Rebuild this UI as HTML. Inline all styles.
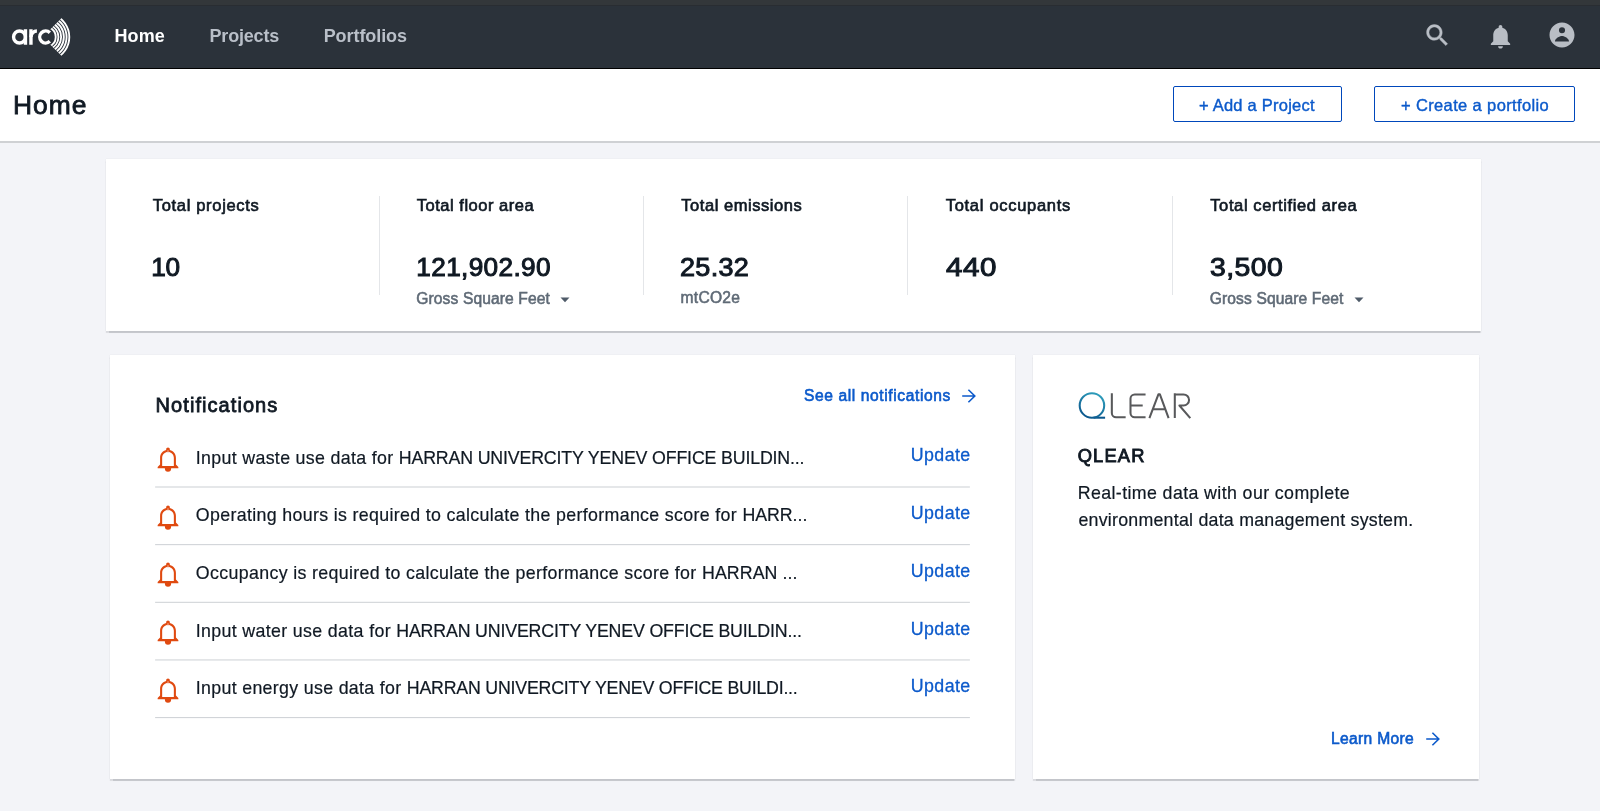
<!DOCTYPE html>
<html lang="en">
<head>
<meta charset="utf-8">
<title>Arc - Home</title>
<style>
*{box-sizing:border-box;margin:0;padding:0}
html,body{width:1600px;height:811px;overflow:hidden}
body{background:#f3f4f8;font-family:"Liberation Sans",sans-serif;color:#101923;position:relative}
.t{position:absolute;white-space:nowrap;line-height:1}
#strip{position:absolute;left:0;top:0;width:1600px;height:5px;background:#33373a}
#nav{position:absolute;left:0;top:5px;width:1600px;height:64px;background:#2b323a;border-top:1px solid #292d32;border-bottom:1px solid #000}
#head{position:absolute;left:0;top:69px;width:1600px;height:74px;background:#fff;border-bottom:2px solid #cfd1d4}
.btn{position:absolute;top:86px;height:36px;border:1px solid #0047bb;border-radius:2px;background:#fff}
.card{position:absolute;background:#fff;box-shadow:0 1.5px 1px rgba(20,25,35,.2),0 0 1px rgba(20,25,35,.10)}
.vdiv{position:absolute;top:196px;width:1px;height:99px;background:#e4e6e9}
.sep{position:absolute;left:155px;width:815px;height:1.5px;background:#dfe2e5}
svg{position:absolute;overflow:visible}
#txt{position:absolute;left:0;top:0;width:1600px;height:811px;will-change:transform}
</style>
</head>
<body>
<div id="strip"></div>
<div id="nav"></div>
<div id="head"></div>
<div class="btn" style="left:1172.7px;width:169.3px"></div>
<div class="btn" style="left:1373.8px;width:201.2px"></div>
<div class="card" style="left:106px;top:159px;width:1375px;height:172px"></div>
<div class="vdiv" style="left:379px"></div>
<div class="vdiv" style="left:643.2px"></div>
<div class="vdiv" style="left:906.9px"></div>
<div class="vdiv" style="left:1171.6px"></div>
<div class="card" style="left:109.5px;top:355px;width:905.5px;height:424px"></div>
<div class="card" style="left:1032.5px;top:355px;width:446px;height:424px"></div>
<svg style="left:0;top:0" width="1600" height="811" viewBox="0 0 1600 811"><rect x="155.1" y="486.50" width="814.8" height="1" fill="#ccd0d4"/><rect x="155.1" y="544.15" width="814.8" height="1" fill="#ccd0d4"/><rect x="155.1" y="601.80" width="814.8" height="1" fill="#ccd0d4"/><rect x="155.1" y="659.45" width="814.8" height="1" fill="#ccd0d4"/><rect x="155.1" y="717.10" width="814.8" height="1" fill="#ccd0d4"/></svg>
<svg style="left:0;top:0" width="90" height="69" viewBox="0 0 90 69"><g fill="none" stroke="#fff"><circle cx="19.5" cy="37.0" r="5.95" stroke-width="3.4"/><path d="M25.45 29.35V44.65M30.95 29.35V44.65" stroke-width="3.4"/><path d="M30.95 37.00A5.95 5.95 0 0 1 36.90 31.05" stroke-width="3.4"/><path d="M49.83 41.28A5.95 5.95 0 1 1 49.83 32.72" stroke-width="3.4"/><g clip-path="url(#fan)"><path d="M49.12 27.60A10.0 10.0 0 0 1 49.12 46.40" stroke-width="1.85"/><path d="M50.05 25.05A12.72 12.72 0 0 1 50.05 48.95" stroke-width="1.85"/><path d="M50.98 22.49A15.44 15.44 0 0 1 50.98 51.51" stroke-width="1.85"/><path d="M51.91 19.94A18.16 18.16 0 0 1 51.91 54.06" stroke-width="1.85"/><path d="M52.84 17.38A20.88 20.88 0 0 1 52.84 56.62" stroke-width="1.85"/><path d="M53.77 14.82A23.6 23.6 0 0 1 53.77 59.18" stroke-width="1.85"/></g></g><defs><clipPath id="fan"><path d="M42.6 37L72.6 7V67z"/></clipPath></defs></svg>
<svg style="left:1070px;top:385px" width="130" height="40" viewBox="1070 385 130 40"><defs><linearGradient id="qg" x1="0.8" y1="0" x2="0.3" y2="1"><stop offset="0" stop-color="#2fa0bd"/><stop offset="1" stop-color="#0a568c"/></linearGradient></defs><g fill="none" stroke-width="2.05" stroke-linejoin="round"><path d="M1093.5 417.7H1105.1" stroke="#0a568c"/><circle cx="1091.94" cy="405.47" r="12.25" stroke="url(#qg)"/><g stroke="#58595b"><path d="M1111.84 393.2V413a4.2 4.2 0 0 0 4.2 4.2H1125.65"/><path d="M1145.56 394.4H1134.7a4.2 4.2 0 0 0-4.2 4.2V413a4.2 4.2 0 0 0 4.2 4.2H1145.56M1130.5 405.5H1142.7"/><path d="M1149.4 418.1L1158.4 394.3H1159.9L1168.6 418.1M1152.9 409.2H1165.3"/><path d="M1174.8 393.2V418.1M1174.8 394.4H1183.5a5.55 5.55 0 0 1 0 11.1H1179.4L1190.3 418.1"/></g></g></svg>
<svg style="left:1422.65px;top:21.15px" width="28.8" height="28.8" viewBox="0 0 24 24"><path d="M15.5 14h-.79l-.28-.27C15.41 12.59 16 11.11 16 9.5 16 5.91 13.09 3 9.5 3S3 5.91 3 9.5 5.91 16 9.5 16c1.61 0 3.09-.59 4.23-1.57l.27.28v.79l5 4.99L20.49 19l-4.99-5zm-6 0C7.01 14 5 11.99 5 9.5S7.01 5 9.5 5 14 7.01 14 9.5 11.99 14 9.5 14z" fill="#b9bec5" stroke="#b9bec5" stroke-width=".35" fill-rule="evenodd"/></svg>
<svg style="left:1486px;top:21.7px" width="29" height="29" viewBox="0 0 24 24"><path d="M12 22c1.1 0 2-.9 2-2h-4c0 1.1.89 2 2 2zm6-6v-5c0-3.07-1.64-5.64-4.5-6.32V4c0-.83-.67-1.5-1.5-1.5s-1.5.67-1.5 1.5v.68C7.63 5.36 6 7.92 6 11v5l-2 2v1h16v-1l-2-2z" fill="#b9bec5" fill-rule="evenodd"/></svg>
<svg style="left:1547.4px;top:20.2px" width="30" height="30" viewBox="0 0 24 24"><path d="M12 2C6.48 2 2 6.48 2 12s4.48 10 10 10 10-4.48 10-10S17.52 2 12 2zM12 5.7a2.45 2.45 0 1 0 0 4.9 2.45 2.45 0 0 0 0-4.9zM6.4 17.1C6.4 14.8 10 12.8 12 12.8s5.6 2 5.6 4.3z" fill="#b9bec5" fill-rule="evenodd"/></svg>
<svg style="left:961px;top:388.8px" width="16" height="14" viewBox="0 0 16 14"><path d="M1.2 7H14.2M7.4 0.8L13.8 7L7.4 13.2" fill="none" stroke="#0c5acb" stroke-width="1.6"/></svg>
<svg style="left:1424.7px;top:731.8px" width="16" height="14" viewBox="0 0 16 14"><path d="M1.2 7H14.2M7.4 0.8L13.8 7L7.4 13.2" fill="none" stroke="#0c5acb" stroke-width="1.6"/></svg>
<svg style="left:560.1px;top:296.5px" width="10" height="6" viewBox="0 0 10 6"><path d="M0.5 0.5h9L5 5.2z" fill="#4f5b69"/></svg>
<svg style="left:1353.6px;top:296.5px" width="10" height="6" viewBox="0 0 10 6"><path d="M0.5 0.5h9L5 5.2z" fill="#4f5b69"/></svg>
<svg style="left:154.45px;top:444.96px" width="29.23" height="29.23" viewBox="0 0 24 24"><path d="M18 16V10.5c0-3.07-2.13-5.64-5-6.32V3.5C13 2.67 12.33 2 11.5 2S10 2.67 10 3.5v.68C7.13 4.86 5 7.43 5 10.5V16l-2 2v1h5.9a2.6 2.9 0 0 0 5.2 0H20v-1l-2-2zM16.3 17.3H6.7v-6.8C6.7 7.85 8.85 5.7 11.5 5.7s4.8 2.15 4.8 4.8v6.8zM11.25 4.3h.5v1.9h-.5z" fill="#e04a10" fill-rule="evenodd"/></svg>
<svg style="left:154.45px;top:502.66px" width="29.23" height="29.23" viewBox="0 0 24 24"><path d="M18 16V10.5c0-3.07-2.13-5.64-5-6.32V3.5C13 2.67 12.33 2 11.5 2S10 2.67 10 3.5v.68C7.13 4.86 5 7.43 5 10.5V16l-2 2v1h5.9a2.6 2.9 0 0 0 5.2 0H20v-1l-2-2zM16.3 17.3H6.7v-6.8C6.7 7.85 8.85 5.7 11.5 5.7s4.8 2.15 4.8 4.8v6.8zM11.25 4.3h.5v1.9h-.5z" fill="#e04a10" fill-rule="evenodd"/></svg>
<svg style="left:154.45px;top:560.36px" width="29.23" height="29.23" viewBox="0 0 24 24"><path d="M18 16V10.5c0-3.07-2.13-5.64-5-6.32V3.5C13 2.67 12.33 2 11.5 2S10 2.67 10 3.5v.68C7.13 4.86 5 7.43 5 10.5V16l-2 2v1h5.9a2.6 2.9 0 0 0 5.2 0H20v-1l-2-2zM16.3 17.3H6.7v-6.8C6.7 7.85 8.85 5.7 11.5 5.7s4.8 2.15 4.8 4.8v6.8zM11.25 4.3h.5v1.9h-.5z" fill="#e04a10" fill-rule="evenodd"/></svg>
<svg style="left:154.45px;top:618.06px" width="29.23" height="29.23" viewBox="0 0 24 24"><path d="M18 16V10.5c0-3.07-2.13-5.64-5-6.32V3.5C13 2.67 12.33 2 11.5 2S10 2.67 10 3.5v.68C7.13 4.86 5 7.43 5 10.5V16l-2 2v1h5.9a2.6 2.9 0 0 0 5.2 0H20v-1l-2-2zM16.3 17.3H6.7v-6.8C6.7 7.85 8.85 5.7 11.5 5.7s4.8 2.15 4.8 4.8v6.8zM11.25 4.3h.5v1.9h-.5z" fill="#e04a10" fill-rule="evenodd"/></svg>
<svg style="left:154.45px;top:675.76px" width="29.23" height="29.23" viewBox="0 0 24 24"><path d="M18 16V10.5c0-3.07-2.13-5.64-5-6.32V3.5C13 2.67 12.33 2 11.5 2S10 2.67 10 3.5v.68C7.13 4.86 5 7.43 5 10.5V16l-2 2v1h5.9a2.6 2.9 0 0 0 5.2 0H20v-1l-2-2zM16.3 17.3H6.7v-6.8C6.7 7.85 8.85 5.7 11.5 5.7s4.8 2.15 4.8 4.8v6.8zM11.25 4.3h.5v1.9h-.5z" fill="#e04a10" fill-rule="evenodd"/></svg>
<div id="txt">
<div class="t" style="left:114.40px;top:27.00px;font-size:18px;color:#ffffff;font-weight:bold;letter-spacing:0.137px">Home</div>
<div class="t" style="left:209.50px;top:27.00px;font-size:18px;color:#b9bfc8;font-weight:bold;letter-spacing:-0.184px">Projects</div>
<div class="t" style="left:323.70px;top:27.00px;font-size:18px;color:#b9bfc8;font-weight:bold;letter-spacing:-0.073px">Portfolios</div>
<div class="t" style="left:13.08px;top:92.40px;font-size:26.4px;color:#101923;letter-spacing:0.964px;-webkit-text-stroke:0.8px #101923">Home</div>
<div class="t" style="left:1198.94px;top:96.75px;font-size:16.5px;color:#0c5acb;letter-spacing:0.236px;-webkit-text-stroke:0.4px #0c5acb">+ Add a Project</div>
<div class="t" style="left:1400.94px;top:96.75px;font-size:16.5px;color:#0c5acb;letter-spacing:0.369px;-webkit-text-stroke:0.4px #0c5acb">+ Create a portfolio</div>
<div class="t" style="left:152.75px;top:197.25px;font-size:16.5px;color:#101923;letter-spacing:0.677px;-webkit-text-stroke:0.65px #101923">Total projects</div>
<div class="t" style="left:416.75px;top:197.25px;font-size:16.5px;color:#101923;letter-spacing:0.518px;-webkit-text-stroke:0.65px #101923">Total floor area</div>
<div class="t" style="left:681.25px;top:197.25px;font-size:16.5px;color:#101923;letter-spacing:0.552px;-webkit-text-stroke:0.65px #101923">Total emissions</div>
<div class="t" style="left:945.75px;top:197.25px;font-size:16.5px;color:#101923;letter-spacing:0.704px;-webkit-text-stroke:0.65px #101923">Total occupants</div>
<div class="t" style="left:1210.25px;top:197.25px;font-size:16.5px;color:#101923;letter-spacing:0.611px;-webkit-text-stroke:0.65px #101923">Total certified area</div>
<div class="t" style="left:151.30px;top:254.40px;font-size:26.2px;color:#101923;letter-spacing:-0.409px;-webkit-text-stroke:1.0px #101923">10</div>
<div class="t" style="left:416.30px;top:254.40px;font-size:26.2px;color:#101923;letter-spacing:0.350px;-webkit-text-stroke:1.0px #101923">121,902.90</div>
<div class="t" style="left:680.46px;top:254.40px;font-size:26.2px;color:#101923;transform:scaleX(1.0323);transform-origin:0 0;letter-spacing:0.300px;-webkit-text-stroke:1.0px #101923">25.32</div>
<div class="t" style="left:945.69px;top:254.40px;font-size:26.2px;color:#101923;transform:scaleX(1.1278);transform-origin:0 0;letter-spacing:0.500px;-webkit-text-stroke:1.0px #101923">440</div>
<div class="t" style="left:1209.76px;top:254.40px;font-size:26.2px;color:#101923;transform:scaleX(1.0845);transform-origin:0 0;letter-spacing:0.400px;-webkit-text-stroke:1.0px #101923">3,500</div>
<div class="t" style="left:416.29px;top:291.25px;font-size:15.6px;color:#5f6a76;letter-spacing:0.113px;-webkit-text-stroke:0.55px #5f6a76">Gross Square Feet</div>
<div class="t" style="left:1209.79px;top:291.25px;font-size:15.6px;color:#5f6a76;letter-spacing:0.113px;-webkit-text-stroke:0.55px #5f6a76">Gross Square Feet</div>
<div class="t" style="left:680.54px;top:290.20px;font-size:15.6px;color:#5f6a76;letter-spacing:0.264px;-webkit-text-stroke:0.55px #5f6a76">mtCO2e</div>
<div class="t" style="left:155.56px;top:394.75px;font-size:20px;color:#101923;letter-spacing:1.069px;-webkit-text-stroke:0.8px #101923">Notifications</div>
<div class="t" style="left:804.09px;top:388.25px;font-size:15.6px;color:#0c5acb;letter-spacing:0.591px;-webkit-text-stroke:0.6px #0c5acb">See all notifications</div>
<div class="t" style="left:195.76px;top:449.60px;font-size:17.8px;color:#101923;letter-spacing:0.333px;-webkit-text-stroke:0.2px #101923">Input waste use data for</div>
<div class="t" style="left:398.84px;top:449.60px;font-size:17.8px;color:#101923;letter-spacing:-0.167px;-webkit-text-stroke:0.2px #101923">HARRAN UNIVERCITY YENEV OFFICE BUILDIN...</div>
<div class="t" style="left:910.83px;top:447.40px;font-size:17.8px;color:#0c5acb;letter-spacing:0.395px;-webkit-text-stroke:0.3px #0c5acb">Update</div>
<div class="t" style="left:195.86px;top:507.30px;font-size:17.8px;color:#101923;letter-spacing:0.338px;-webkit-text-stroke:0.2px #101923">Operating hours is required to calculate the performance score for</div>
<div class="t" style="left:742.44px;top:507.30px;font-size:17.8px;color:#101923;letter-spacing:-0.053px;-webkit-text-stroke:0.2px #101923">HARR...</div>
<div class="t" style="left:910.83px;top:505.10px;font-size:17.8px;color:#0c5acb;letter-spacing:0.395px;-webkit-text-stroke:0.3px #0c5acb">Update</div>
<div class="t" style="left:195.86px;top:565.00px;font-size:17.8px;color:#101923;letter-spacing:0.339px;-webkit-text-stroke:0.2px #101923">Occupancy is required to calculate the performance score for</div>
<div class="t" style="left:702.04px;top:565.00px;font-size:17.8px;color:#101923;letter-spacing:0.060px;-webkit-text-stroke:0.2px #101923">HARRAN ...</div>
<div class="t" style="left:910.83px;top:562.80px;font-size:17.8px;color:#0c5acb;letter-spacing:0.395px;-webkit-text-stroke:0.3px #0c5acb">Update</div>
<div class="t" style="left:195.76px;top:622.70px;font-size:17.8px;color:#101923;letter-spacing:0.349px;-webkit-text-stroke:0.2px #101923">Input water use data for</div>
<div class="t" style="left:396.24px;top:622.70px;font-size:17.8px;color:#101923;letter-spacing:-0.167px;-webkit-text-stroke:0.2px #101923">HARRAN UNIVERCITY YENEV OFFICE BUILDIN...</div>
<div class="t" style="left:910.83px;top:620.50px;font-size:17.8px;color:#0c5acb;letter-spacing:0.395px;-webkit-text-stroke:0.3px #0c5acb">Update</div>
<div class="t" style="left:195.76px;top:680.40px;font-size:17.8px;color:#101923;letter-spacing:0.322px;-webkit-text-stroke:0.2px #101923">Input energy use data for</div>
<div class="t" style="left:406.84px;top:680.40px;font-size:17.8px;color:#101923;letter-spacing:-0.219px;-webkit-text-stroke:0.2px #101923">HARRAN UNIVERCITY YENEV OFFICE BUILDI...</div>
<div class="t" style="left:910.83px;top:678.20px;font-size:17.8px;color:#0c5acb;letter-spacing:0.395px;-webkit-text-stroke:0.3px #0c5acb">Update</div>
<div class="t" style="left:1077.68px;top:447.00px;font-size:18.3px;color:#101923;letter-spacing:1.185px;-webkit-text-stroke:0.9px #101923">QLEAR</div>
<div class="t" style="left:1077.69px;top:484.75px;font-size:17.8px;color:#101923;letter-spacing:0.390px;-webkit-text-stroke:0.2px #101923">Real-time data with our complete</div>
<div class="t" style="left:1078.39px;top:511.75px;font-size:17.8px;color:#101923;letter-spacing:0.242px;-webkit-text-stroke:0.2px #101923">environmental data management system.</div>
<div class="t" style="left:1331.07px;top:731.25px;font-size:15.6px;color:#0c5acb;letter-spacing:0.314px;-webkit-text-stroke:0.6px #0c5acb">Learn More</div>
</div>
</body>
</html>
